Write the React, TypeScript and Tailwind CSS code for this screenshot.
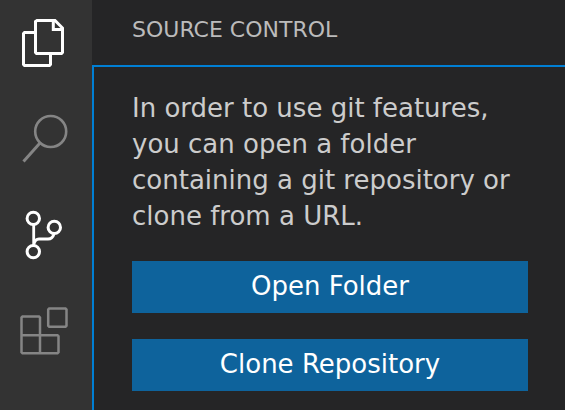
import type { ReactNode } from "react";

function Item({ label, active, className, children }: { label: string; active?: boolean; className: string; children: ReactNode }) {
  return (
    <button aria-label={label} className={`block shrink-0 ${className} ${active ? "text-white" : "text-[#858585]"}`}>
      <svg width="92" height="96" viewBox="0 0 92 96" fill="none" stroke="currentColor" strokeWidth="3">
        {children}
      </svg>
    </button>
  );
}

function Action({ children }: { children: ReactNode }) {
  return <button className="block h-[52px] w-full bg-[#0e639c] pb-0.5 text-center text-[26px] leading-[50px] text-white">{children}</button>;
}

export default function App() {
  return (
    <div className="flex h-[410px] w-[565px] overflow-hidden bg-[#252526] font-['DejaVu_Sans',sans-serif]">
      <nav className="flex w-[92px] shrink-0 flex-col bg-[#333333]">
        <Item label="Explorer" active className="h-24">
          <path d="M35.500 32.500H24.500L23.500 33.500V64.500L24.500 65.500H49.500L50.500 64.500V54" />
          <path d="M37 20.500H55L62.500 28V52.500L61.500 53.500H36.500L35.500 52.500V21.500Z" />
          <path d="M53.300 20V29.500H63" />
        </Item>
        <Item label="Search" className="h-24">
          <circle cx="50.700" cy="35.500" r="15.500" strokeWidth="2.600" />
          <path d="M40 47L23.500 65.500" />
        </Item>
        <Item label="Source Control" active className="h-24">
          <circle cx="33.300" cy="26.400" r="6.200" />
          <circle cx="54.300" cy="35.400" r="6.200" />
          <circle cx="33.300" cy="59.600" r="6.200" />
          <path d="M33.700 33V53M34 52Q35 47 39 47H48Q52.500 47 54 42" strokeWidth="2.800" />
        </Item>
        <Item label="Extensions" className="h-24">
          <path d="M22.500 28.500H39L40 29.500V47.200H57.500L58.500 48.200V64.300L57.500 65.300H22.500L21.500 64.300V29.500ZM21.500 47.200H40V65.300" strokeWidth="2.500" />
          <path d="M49.200 20.500H65.500L66.500 21.500V37.700L65.500 38.700H49.200L48.200 37.700V21.500Z" strokeWidth="2.500" />
        </Item>
      </nav>
      <main className="flex min-w-0 flex-1 flex-col">
        <h2 className="h-[65px] shrink-0 pl-10 text-[22px] leading-[59px] text-[#bbbbbb]">SOURCE CONTROL</h2>
        <section className="flex-1 border-l-2 border-t-2 border-[#007fd4] pl-[38px] pr-[37px] pt-[23px]">
          <p className="mb-[27px] whitespace-nowrap text-[26px] leading-9 text-[#cccccc]">
            In order to use git features,<br />you can open a folder<br />containing a git repository or<br />clone from a URL.
          </p>
          <div className="flex flex-col gap-[26px]">
            <Action>Open Folder</Action>
            <Action>Clone Repository</Action>
          </div>
        </section>
      </main>
    </div>
  );
}
